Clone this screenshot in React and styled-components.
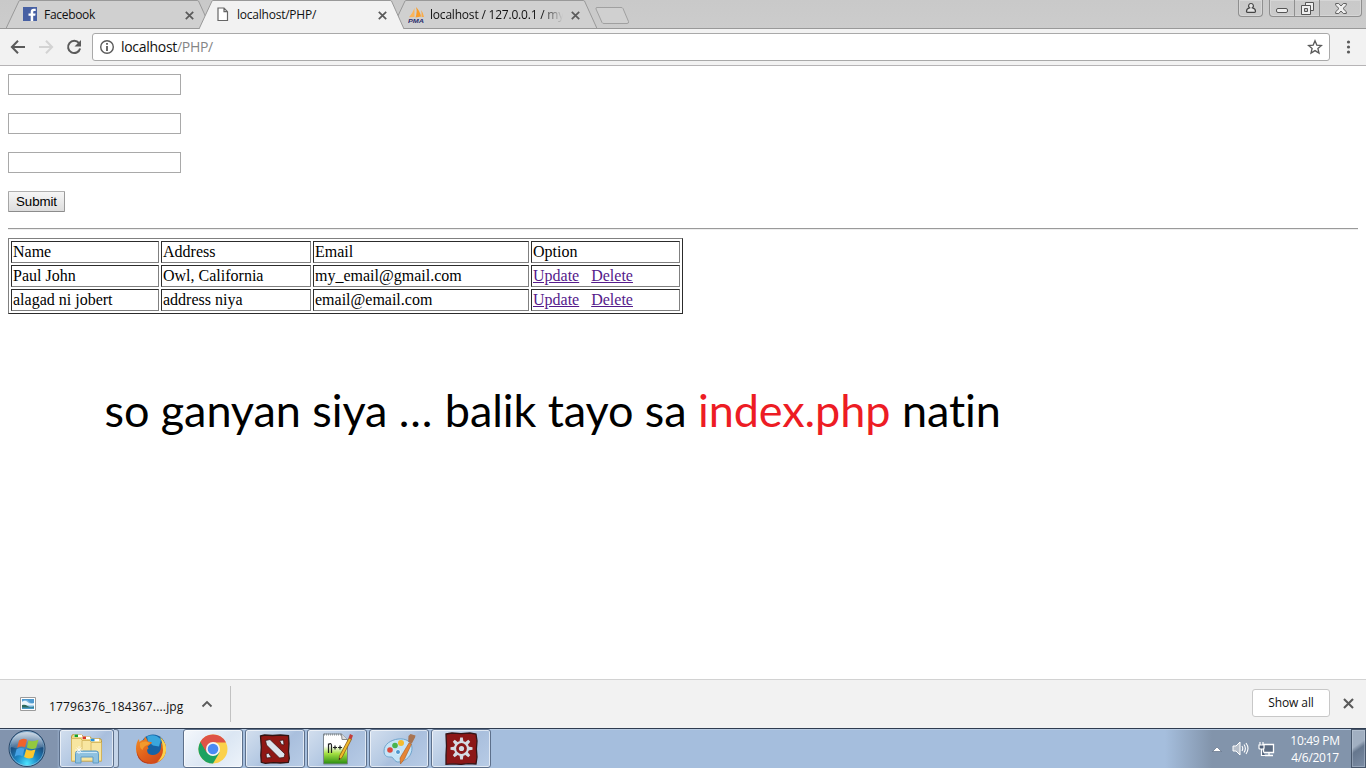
import React from 'react';
import styled, { createGlobalStyle } from 'styled-components';

const ui = `'Open Sans', 'Noto Sans', sans-serif`;

const Global = createGlobalStyle`
  *, *::before, *::after { box-sizing: border-box; }
  html, body { margin: 0; padding: 0; background: #fff; overflow: hidden; }
  svg { display: block; flex: none; }
`;

const Screen = styled.div`
  width: 1366px;
  height: 768px;
  display: flex;
  flex-direction: column;
  overflow: hidden;
  background: #fff;
`;

const Label = styled.span`
  font-family: ${ui};
  font-size: ${p => p.$size || 12}px;
  letter-spacing: ${p => p.$track || 0}px;
  color: ${p => p.$color || '#111'};
  white-space: nowrap;
  line-height: 16px;
`;

/* ---------- tab strip ---------- */
const TabStrip = styled.header`
  height: 29px;
  flex: none;
  display: flex;
  padding-left: 6px;
  background: linear-gradient(#c9c9c9, #cccccc);
  box-shadow: inset 0 -1px 0 #999;
`;

const Tab = styled.div`
  position: relative;
  z-index: ${p => (p.$active ? 2 : 1)};
  width: 205px;
  height: 29px;
  margin-right: -12px;
  padding: 0 11px 0 16px;
  display: flex;
  align-items: center;
`;

const TabShape = styled.svg`
  position: absolute;
  left: 0;
  top: 0;
`;

const TabIcon = styled.span`
  position: relative;
  width: 16px;
  height: 16px;
  margin-top: 1px;
  margin-right: 6px;
  padding-left: ${p => p.$inset || 0}px;
`;

const TabTitle = styled(Label)`
  position: relative;
  width: 134px;
  overflow: hidden;
  mask-image: ${p => (p.$fade ? 'linear-gradient(90deg, #000 112px, transparent 133px)' : 'none')};
`;

const TabClose = styled.svg`
  position: relative;
  margin-left: auto;
  margin-right: 6.5px;
  margin-top: 1px;
`;

const NewTab = styled.svg`
  margin: 6px 0 0 9px;
`;

const CaptionButtons = styled.div`
  display: flex;
  margin-left: auto;
  padding-right: 4px;
  gap: 6px;
  align-items: flex-start;
`;

const CaptionGroup = styled.div`
  display: flex;
  height: 17px;
  border: 1px solid #8f8f8f;
  border-top: 0;
  border-radius: 0 0 4px 4px;
  box-shadow: inset 0 0 0 1px #d6d6d6;
`;

const CaptionButton = styled.div`
  width: ${p => p.$w}px;
  display: flex;
  align-items: center;
  justify-content: center;
  & + & { border-left: 1px solid #8f8f8f; }
`;

/* ---------- toolbar ---------- */
const Toolbar = styled.div`
  height: 37px;
  flex: none;
  display: flex;
  align-items: center;
  background: #f2f2f2;
  border-bottom: 1px solid #b6b4b6;
  padding: 0 10px;
`;

const NavButtons = styled.div`
  width: 82px;
  display: flex;
  gap: 12px;
`;

const Omnibox = styled.div`
  width: 1238px;
  height: 28px;
  border: 1px solid #a9a9a9;
  border-radius: 3px;
  background: #fff;
  display: flex;
  align-items: center;
  padding: 0 6px;
`;

const Url = styled(Label)`
  margin-left: 6px;
  flex: 1;
  i { font-style: normal; color: #858585; }
`;

const MenuDots = styled.svg`
  margin-left: 14px;
`;

/* ---------- web page ---------- */
const Page = styled.main`
  flex: 1;
  padding: 8px;
  font-family: 'Liberation Serif', 'Times New Roman', serif;
  font-size: 16px;
  color: #000;
`;

const Form = styled.form`
  display: flex;
  flex-direction: column;
  align-items: flex-start;
  gap: 18px;
`;

const Field = styled.input`
  width: 173px;
  height: 21px;
  border: 1px solid #a9a9a9;
  background: #fff;
  padding: 1px;
  margin: 0;
  outline: none;
`;

const Submit = styled.button`
  width: 57px;
  height: 21px;
  padding: 0;
  border: 1px solid;
  border-color: #b0b0b0 #9a9a9a #8c8c8c #a6a6a6;
  border-radius: 1px;
  background: linear-gradient(#f6f6f6, #dddddd);
  font: 13.33px/18px 'Liberation Sans', Arial, sans-serif;
  letter-spacing: -0.1px;
  color: #000;
`;

const Rule = styled.hr`
  margin: 16px 0 8px;
  height: 2px;
  border: 0;
  border-top: 1px solid #9a9a9a;
  border-bottom: 1px solid #eeeeee;
`;

const Records = styled.table`
  width: 675px;
  table-layout: fixed;
  border-collapse: separate;
  border-spacing: 2px;
  border: 1px solid;
  border-color: #808080 #2c2c2c #2c2c2c #808080;
`;

const Cell = styled.td`
  height: 22px;
  padding: 1px;
  border: 1px solid;
  border-color: #2c2c2c #808080 #808080 #2c2c2c;
  line-height: 18px;
  white-space: nowrap;
`;

const Link = styled.a`
  color: #551a8b;
  text-decoration: underline;
  margin-right: 12px;
`;

const Note = styled.p`
  margin: 66px 0 0 96.5px;
  font-family: Lato, 'Open Sans', sans-serif;
  font-size: 45px;
  line-height: 60px;
  letter-spacing: -0.08px;
  white-space: nowrap;
  em { font-style: normal; color: #ed1c24; }
`;

const Dots = styled.span`
  letter-spacing: 0.9px;
`;

/* ---------- downloads shelf ---------- */
const Shelf = styled.div`
  height: 49px;
  flex: none;
  display: flex;
  align-items: center;
  background: #f2f2f2;
  border-top: 1px solid #d2d2d2;
  padding: 0 12px 0 20px;
`;

const DownloadItem = styled.div`
  width: 211px;
  height: 36px;
  border-right: 1px solid #c2c2c2;
  display: flex;
  align-items: center;
`;

const FileName = styled(Label)`
  width: 152px;
  margin-left: 13px;
  margin-top: 5px;
`;

const ShowAll = styled.button`
  width: 78px;
  height: 28px;
  margin-left: auto;
  margin-right: 13px;
  padding: 0;
  background: #fff;
  border: 1px solid #c8c8c8;
  border-radius: 3px;
  margin-top: -2px;
`;

const ShelfClose = styled.svg`
  margin-top: -2px;
`;

/* ---------- taskbar ---------- */
const Taskbar = styled.footer`
  height: 40px;
  flex: none;
  display: flex;
  border-top: 1px solid #2f3c50;
  background: linear-gradient(90deg, #8294ae 0 57px, #a5bedd 61px 1165px, #8294ab 1212px);
  box-shadow: inset 0 1px 0 #b7cbe3;
`;

const Start = styled.div`
  width: 59px;
  padding: 0 0 0 8px;
`;

const Task = styled.div`
  width: ${p => p.$w || 60}px;
  height: 39px;
  margin-right: ${p => p.$mr ?? 2}px;
  display: flex;
  align-items: center;
  justify-content: center;
  border: 1px solid ${p => (p.$plain ? 'transparent' : '#5d708b')};
  border-radius: 3px;
  background: ${p =>
    p.$plain
      ? 'transparent'
      : p.$bright
      ? 'linear-gradient(135deg, #f5f8fc, #dbe6f3 55%, #edf3fa)'
      : 'linear-gradient(135deg, #d3dfee, #b5c9e3 45%, #a9bfdd 55%, #b8cce6)'};
  box-shadow: ${p => (p.$plain ? 'none' : 'inset 0 0 0 1px rgba(255,255,255,.6)')};
`;

const StackEdge = styled.div`
  width: 5px;
  height: 39px;
  border: 1px solid #64768f;
  border-left: 0;
  border-radius: 0 3px 3px 0;
  background: #c4d4e8;
`;

const Tray = styled.div`
  margin-left: auto;
  display: flex;
  align-items: center;
`;

const TrayIcons = styled.div`
  display: flex;
  align-items: center;
  gap: 9px;
  width: 79px;
`;

const Clock = styled.div`
  width: 50px;
  margin-right: 11px;
  display: flex;
  flex-direction: column;
  align-items: center;
  gap: 1px;
  padding-top: 2px;
`;

const ShowDesktop = styled.div`
  width: 15px;
  height: 39px;
  border: 1px solid #47566b;
  background: linear-gradient(145deg, #a1afc1 0 40%, #66778e 52%, #7c8da5);
  box-shadow: inset 0 0 0 1px rgba(210, 222, 236, .35);
`;

/* ---------- drawings ---------- */
const FacebookIcon = () => (
  <svg width="15" height="15" viewBox="0 0 15 15">
    <path d="M1 0h14v14H1z" fill="#4760a3" />
    <path d="M8.700 14V8.800H6.500V6.400h2.200V4.700C8.700 2.800 9.800 1.700 11.700 1.700h2v2.200H12.500c-1 0-1.300.4-1.300 1.200v1.300h2.400l-.4 2.400h-2V14z" fill="#fff" />
  </svg>
);

const FileIcon = () => (
  <svg width="12" height="15" viewBox="0 0 12 15">
    <path d="M1 1h6l3.500 3.700V13.500H1zM7 1v3.700h3.500" fill="#fff" stroke="#666" strokeWidth="1.2" />
  </svg>
);

const PmaIcon = () => (
  <svg width="17" height="16" viewBox="0 0 17 16">
    <path d="M6.500 1v9L1 10.200Q4.500 6.500 6.500 1z" fill="#fbb55a" />
    <path d="M8 0q4 4 5 9.500L7.500 10.500Q9.500 5 8 0z" fill="#f89c28" />
    <path d="M13 3q2.500 3 3 7h-2.500Q14 6 13 3z" fill="#f9ab49" />
    <text x="0" y="15.500" fontFamily="Liberation Sans, sans-serif" fontWeight="700" fontStyle="italic" fontSize="6" textLength="16" lengthAdjust="spacingAndGlyphs" fill="#2b2d6d">PMA</text>
  </svg>
);

const Close = ({ as: Tag = 'svg', size = 9, ...rest }) => (
  <Tag width={size} height={size} viewBox="0 0 9 9" {...rest}>
    <path d="M.8.8l7.400 7.400M8.200.8L.8 8.200" stroke="#5a5a5a" strokeWidth="1.700" fill="none" />
  </Tag>
);

const ImageIcon = () => (
  <svg width="16" height="14" viewBox="0 0 16 14">
    <path d="M.5.5h15v13H.5z" fill="#fff" stroke="#9b9b9b" />
    <path d="M2 2h12v10H2z" fill="#79b7df" />
    <path d="M2 4q5-2 7 .5T14 6V2H2z" fill="#4f9ad0" />
    <path d="M2 5q3-2.500 5.500 0t6.500 1v2.500H2z" fill="#e9f5fc" />
    <path d="M2 8q3-1 5.500 1T14 9.500V11H2z" fill="#2d6a5a" />
    <path d="M2 10.500h12V12H2z" fill="#4a9bc8" />
  </svg>
);

const StartOrb = () => (
  <svg width="38" height="39" viewBox="0 0 38 39">
    <defs>
      <radialGradient id="orb" cx=".5" cy=".92" r=".85">
        <stop offset="0" stopColor="#4ce4ff" />
        <stop offset=".35" stopColor="#1c88c5" />
        <stop offset=".7" stopColor="#1c4f80" />
        <stop offset="1" stopColor="#547ca5" />
      </radialGradient>
      <linearGradient id="gloss" x2="0" y2="1">
        <stop offset="0" stopColor="#fff" stopOpacity=".7" />
        <stop offset="1" stopColor="#fff" stopOpacity=".12" />
      </linearGradient>
    </defs>
    <circle cx="19" cy="19.500" r="18" fill="url(#orb)" stroke="#274667" />
    <circle cx="19" cy="19.500" r="17" fill="none" stroke="#9cc7e2" strokeOpacity=".6" />
    <path d="M3 18C3 8 10 3 19 3s16 5 16 15q-16 5-32 0z" fill="url(#gloss)" />
    <path d="M11 11.500q4-3 8-.8l-2 7.500q-4-1.800-7.900.6z" fill="#f1632a" />
    <path d="M20.500 11.300q4 2 10-.6l-2.400 8.300q-4.600 2-9.200-.4z" fill="#93c83e" />
    <path d="M8.500 20.300q4-2.400 8-.6l-2 7.500q-4-2-7.900.5z" fill="#46a2e5" />
    <path d="M18.200 20.200q4.500 2.200 9.300.4l-2.400 8q-4.600 2-9-.5z" fill="#fdc72e" />
  </svg>
);

const FolderIcon = () => (
  <svg width="33" height="31" viewBox="0 0 33 31">
    <path d="M1.500 4q0-2.500 2-2.500h8l1.500 2h7l1.500 2H29q2.500 0 2.500 2V28h-30z" fill="#f1da83" stroke="#b99a45" />
    <path d="M4 2.800h8" stroke="#fff" strokeWidth="2.500" />
    <path d="M4.500 2.800h3.500" stroke="#12a12b" strokeWidth="2.500" />
    <path d="M12 4.800h8" stroke="#fff" strokeWidth="2.500" />
    <path d="M12.500 4.800h3.500" stroke="#d6382a" strokeWidth="2.500" />
    <path d="M20 7h9" stroke="#fff" strokeWidth="2.500" />
    <path d="M20.500 7h4" stroke="#2192df" strokeWidth="2.500" />
    <path d="M1.500 5.500H11l1 2h8l1 2h10.500V28h-30z" fill="#f8e6a0" stroke="#d0b055" strokeWidth=".8" />
    <path d="M12 8v10M21 10v8" stroke="#d8bc66" />
    <path d="M5.500 30V20.500q0-2.500 2.500-2.500h18q2.500 0 2.500 2.500V30h-5.500v-6H11v6z" fill="#8fc2e0" stroke="#5f9bc4" />
    <path d="M7 19.500h20" stroke="#cfe9f7" />
    <path d="M9 13v8M5 17h8M6.500 14.500l5 5M11.500 14.500l-5 5" stroke="#fff" strokeWidth=".8" strokeOpacity=".85" />
  </svg>
);

const FirefoxIcon = () => (
  <svg width="32" height="32" viewBox="0 0 32 32">
    <defs>
      <linearGradient id="fox" x1=".1" x2=".9" y2="1">
        <stop offset="0" stopColor="#ef8a25" />
        <stop offset=".5" stopColor="#e1601a" />
        <stop offset="1" stopColor="#c9411a" />
      </linearGradient>
    </defs>
    <circle cx="18" cy="14" r="12.500" fill="#1763a5" />
    <path d="M12 3.500q8-3.500 14 3l-2 7-6-1-5-4z" fill="#39a6dd" />
    <path d="M25 4q7 6 6 14c-1 8-8 13-15 13S1 25 1 16q0-7 3-10l.5 3Q6 7 9 7l1-3.500q2 2.500 3 5 3.500 0 4 1.500l-4.500 3.500q2 3-.5 3 0 5 5 5.500 5 .5 8-4 2-5 .5-9 2 2 2.500 5 .5-6-3-10z" fill="url(#fox)" />
    <path d="M25 4q7 6 6 14-1 8-9 11.500 6-6.500 6-12.500-.5-8-3-13z" fill="#fbd04a" />
    <path d="M5 10q3-2 6-1.500l4.500 1.500-3 2q-4 1-5 5Q4 15 5 10z" fill="#f39a2c" />
    <path d="M2 18q2 12 14 12Q8 32 3.500 25 2 22 2 18z" fill="#b5391a" />
  </svg>
);

const ChromeIcon = () => (
  <svg width="30" height="30" viewBox="0 0 30 30">
    <circle cx="15" cy="15" r="14.500" fill="#fbd14b" />
    <path d="M15 15L2.440 7.750A14.500 14.500 0 0 0 15 29.500L21.500 18.500z" fill="#1ca261" />
    <path d="M15 15l-6.500 3L2.440 7.750A14.500 14.500 0 0 1 27.560 7.750L27.800 8.500H15z" fill="#de5347" />
    <path d="M2.440 7.750L8.800 18.500 15 15z" fill="#de5347" />
    <circle cx="15" cy="15" r="7" fill="#f4f4f4" />
    <circle cx="15" cy="15" r="5.300" fill="#4a8af4" />
  </svg>
);

const DotaIcon = () => (
  <svg width="32" height="30" viewBox="0 0 32 30">
    <path d="M1.500 2l4-1 8 .5 8-.5 8 .5.5 8-.5 8 .8 7-1 4-8 .5-7-.3-8 .6-4-1-.5-7 .5-8z" fill="#8f1714" stroke="#301312" strokeWidth="1.300" />
    <path d="M6.500 6.500l4.500-1L26 20l-1 3.500-4.500.5L7.500 11zM20.500 6.500l4-.5.5 5-2.500-.5zM7 20l2.500-1 3 4.500-5 .5z" fill="#dbe3ec" stroke="#421313" strokeWidth=".8" />
  </svg>
);

const NotepadIcon = () => (
  <svg width="31" height="34" viewBox="0 0 31 34">
    <defs>
      <linearGradient id="npp" x2="0" y2="1">
        <stop offset=".4" stopColor="#fff" />
        <stop offset=".65" stopColor="#a5e042" />
        <stop offset="1" stopColor="#278b10" />
      </linearGradient>
    </defs>
    <path d="M1.500 2h18l6 5.500V32h-24z" fill="url(#npp)" stroke="#7d8790" />
    <path d="M2 2.500h17" stroke="#8c949a" strokeWidth="2" strokeDasharray="1 1" />
    <path d="M19.500 2l.5 5.500h5.500" fill="#ddd" stroke="#888" />
    <path d="M6.500 21v-9.500M6.500 12.500q3-2 3 1V21" fill="none" stroke="#222" strokeWidth="1.200" />
    <path d="M11 15.500h4M13 13.500v4M16 15.500h4M18 13.500v4" fill="none" stroke="#222" strokeWidth="1.200" />
    <path d="M27 6l2.500 1.200-9.500 18.300-3 2.500.5-4z" fill="#efb929" stroke="#8a5b18" strokeWidth=".8" />
    <path d="M28 2l3 1.500-1.500 3.700L26.500 6z" fill="#c33d38" />
    <path d="M17.200 25.800l1.200.7-1.500 1.800z" fill="#222" />
  </svg>
);

const PaintIcon = () => (
  <svg width="33" height="32" viewBox="0 0 33 32">
    <path d="M15 6c8-1 14 3 14 9 0 7-5 13-13 14-5 .5-5-5-8-5S1 24 1 18C1 11 8 7 15 6z" fill="#c5e4f7" stroke="#6fa4cc" />
    <circle cx="7" cy="17" r="2.800" fill="#dd4a3d" />
    <circle cx="12" cy="12.500" r="2.800" fill="#49b34f" />
    <circle cx="18" cy="10" r="3" fill="#f4bc2e" />
    <circle cx="15" cy="19" r="2.500" fill="#4d98cf" stroke="#e9f7ff" />
    <path d="M26 10l2.500 1-7 15-4 5-.5-6z" fill="#e68635" stroke="#ad5b22" strokeWidth=".6" />
    <path d="M25.500 3l2-2 5 1.500-.5 2-3.200 6-3.600-1.500z" fill="#a87452" />
  </svg>
);

const teeth = [0, 45, 90, 135, 180, 225, 270, 315];
const GearIcon = () => (
  <svg width="33" height="33" viewBox="0 0 33 33">
    <path d="M1 2l6-1 9 .6L25 1l6 1 1 7-.6 8 .6 8-1 7-8-.4-7 .8-8-.6-7 .5L1 23l.5-9z" fill="#8c1718" stroke="#351417" strokeWidth="1.300" />
    <g fill="#d5dce4">
      {teeth.map(a => (
        <path key={a} d="M15.200 5.500h2.600l.7 4.500h-4z" transform={`rotate(${a} 16.500 16.500)`} />
      ))}
    </g>
    <circle cx="16.500" cy="16.500" r="6.500" fill="none" stroke="#d5dce4" strokeWidth="2.200" />
    <circle cx="16.500" cy="16.500" r="2.600" fill="#d5dce4" />
  </svg>
);

const SpeakerIcon = () => (
  <svg width="17" height="15" viewBox="0 0 17 15">
    <path d="M1 5h3l4-4v13l-4-4H1z" fill="#b7bfca" stroke="#fff" />
    <path d="M10 5q1.500 2.500 0 5M12 3.500q2.800 4 0 8M14 2q4 5.500 0 11" fill="none" stroke="#fff" strokeWidth="1.100" />
  </svg>
);

const NetworkIcon = () => (
  <svg width="17" height="16" viewBox="0 0 17 16">
    <path d="M5.500 3.500h10v8h-10zM7 14.500h8M11 12v2" fill="#5d6d83" stroke="#fff" strokeWidth="1.300" />
    <path d="M1 4h5v3q0 1-1 1H2Q1 8 1 7zM2 1v3M5 1v3M3.500 8v6.500H7" fill="#52627a" stroke="#fff" strokeWidth="1.200" />
  </svg>
);

const tabs = [
  { title: 'Facebook', icon: <FacebookIcon />, track: -0.3 },
  { title: 'localhost/PHP/', icon: <FileIcon />, inset: 2, active: true, track: -0.23 },
  { title: 'localhost / 127.0.0.1 / my', icon: <PmaIcon />, fade: true, track: -0.2 },
];

const rows = [
  ['Paul John', 'Owl, California', 'my_email@gmail.com'],
  ['alagad ni jobert', 'address niya', 'email@email.com'],
];

export default function App() {
  return (
    <>
      <Global />
      <Screen>
        <TabStrip>
          {tabs.map(t => (
            <Tab key={t.title} $active={t.active}>
              <TabShape width="205" height="29" viewBox="0 0 205 29">
                <path
                  d={t.active ? 'M0 29L13 1Q13.500.5 14 .5H191Q192 .5 192.500 1L205 29' : 'M0 28.500L13 1Q13.500.5 14 .5H191Q192 .5 192.500 1L205 28.500z'}
                  fill={t.active ? '#f2f2f2' : '#d0d0d0'}
                  stroke="#999"
                />
              </TabShape>
              <TabIcon $inset={t.inset}>{t.icon}</TabIcon>
              <TabTitle $track={t.track} $fade={t.fade}>{t.title}</TabTitle>
              <Close as={TabClose} />
            </Tab>
          ))}
          <NewTab width="37" height="19" viewBox="0 0 37 19">
            <path d="M3 1.500H27Q28.500 1.500 29 2.500L34.500 15.500Q35 17.500 33 17.500H10Q8.500 17.500 8 16.500L2 3Q1.500 1.500 3 1.500z" fill="#d0d0d0" stroke="#a0a0a0" />
          </NewTab>
          <CaptionButtons>
            <CaptionGroup>
              <CaptionButton $w={23}>
                <svg width="12" height="12" viewBox="0 0 12 12">
                  <path d="M6 1.500a2.400 2.400 0 0 1 1.500 4.300q3 .7 3 3.500 0 1-1 1h-7q-1 0-1-1 0-2.800 3-3.500A2.400 2.400 0 0 1 6 1.500z" fill="#e5e5e5" stroke="#444" strokeWidth="1.200" />
                </svg>
              </CaptionButton>
            </CaptionGroup>
            <CaptionGroup>
              <CaptionButton $w={24}>
                <svg width="12" height="13" viewBox="0 0 12 13">
                  <rect x=".5" y="6.500" width="11" height="4" rx="1.500" fill="#eee" stroke="#555" />
                </svg>
              </CaptionButton>
              <CaptionButton $w={25}>
                <svg width="13" height="13" viewBox="0 0 13 13">
                  <path d="M4.500.5h8v8h-8z" fill="#eee" stroke="#555" />
                  <path d="M.5 3.500h9v9h-9z" fill="#eee" stroke="#555" />
                  <path d="M3.500 6.500h3v3h-3z" fill="#ccc" stroke="#555" />
                </svg>
              </CaptionButton>
              <CaptionButton $w={42}>
                <svg width="12" height="11" viewBox="0 0 12 11">
                  <path d="M.7.5h3L6 3 8.300.5h3v1.800L8 5.500l3.300 3.200v1.800h-3L6 8l-2.300 2.500h-3V8.700L4 5.500.7 2.300z" fill="#eee" stroke="#555" strokeWidth=".9" />
                </svg>
              </CaptionButton>
            </CaptionGroup>
          </CaptionButtons>
        </TabStrip>

        <Toolbar>
          <NavButtons>
            <svg width="16" height="16" viewBox="0 0 16 16">
              <path d="M15 8H2.500M8 1.800L1.900 8 8 14.200" fill="none" stroke="#5a5a5a" strokeWidth="2" />
            </svg>
            <svg width="16" height="16" viewBox="0 0 16 16">
              <path d="M1 8h12.500M8 1.800L14.100 8 8 14.200" fill="none" stroke="#d3d3d3" strokeWidth="2" />
            </svg>
            <svg width="16" height="16" viewBox="0 0 16 16">
              <path d="M13 4.200A6.100 6.100 0 1 0 14.100 9.500" fill="none" stroke="#5a5a5a" strokeWidth="2" />
              <path d="M15 1v6.500H8.500z" fill="#5a5a5a" />
            </svg>
          </NavButtons>
          <Omnibox>
            <svg width="16" height="16" viewBox="0 0 16 16">
              <circle cx="8" cy="8" r="6.300" fill="none" stroke="#5a5a5a" strokeWidth="1.400" />
              <path d="M8 7v5M8 4v1.700" stroke="#5a5a5a" strokeWidth="1.800" />
            </svg>
            <Url $size={14} $track={-0.3}>localhost<i>/PHP/</i></Url>
            <svg width="16" height="16" viewBox="0 0 16 16">
              <path d="M8 1.800l1.800 4.300 4.700.4-3.600 3 1.100 4.600L8 11.600l-4 2.500 1.100-4.600-3.600-3 4.700-.4z" fill="none" stroke="#5a5a5a" strokeWidth="1.300" />
            </svg>
          </Omnibox>
          <MenuDots width="8" height="14" viewBox="0 0 8 14" fill="#5a5a5a">
            <circle cx="4.500" cy="2" r="1.600" />
            <circle cx="4.500" cy="7" r="1.600" />
            <circle cx="4.500" cy="12" r="1.600" />
          </MenuDots>
        </Toolbar>

        <Page>
          <Form>
            <Field />
            <Field />
            <Field />
            <Submit type="button">Submit</Submit>
          </Form>
          <Rule />
          <Records>
            <colgroup>
              <col style={{ width: 148 }} />
              <col style={{ width: 150 }} />
              <col style={{ width: 216 }} />
              <col style={{ width: 149 }} />
            </colgroup>
            <tbody>
              <tr>
                {['Name', 'Address', 'Email', 'Option'].map(h => <Cell key={h}>{h}</Cell>)}
              </tr>
              {rows.map(r => (
                <tr key={r[0]}>
                  {r.map(c => <Cell key={c}>{c}</Cell>)}
                  <Cell><Link>Update</Link><Link>Delete</Link></Cell>
                </tr>
              ))}
            </tbody>
          </Records>
          <Note>so ganyan siya <Dots>...</Dots> balik tayo sa <em>index.php</em> natin</Note>
        </Page>

        <Shelf>
          <DownloadItem>
            <ImageIcon />
            <FileName $track={0.17}>17796376_184367....jpg</FileName>
            <svg width="12" height="8" viewBox="0 0 12 8">
              <path d="M1.500 6.500L6 2l4.500 4.500" fill="none" stroke="#5a5a5a" strokeWidth="1.800" />
            </svg>
          </DownloadItem>
          <ShowAll><Label $track={-0.1}>Show all</Label></ShowAll>
          <Close as={ShelfClose} size={11} />
        </Shelf>

        <Taskbar>
          <Start><StartOrb /></Start>
          <Task $w={55} $mr={0}><FolderIcon /></Task>
          <StackEdge />
          <Task $plain $w={64} $mr={0}><FirefoxIcon /></Task>
          <Task $bright><ChromeIcon /></Task>
          <Task><DotaIcon /></Task>
          <Task><NotepadIcon /></Task>
          <Task><PaintIcon /></Task>
          <Task><GearIcon /></Task>
          <Tray>
            <TrayIcons>
              <svg width="12" height="8" viewBox="0 0 12 8">
                <path d="M1.500 6.500L6 2l4.500 4.500z" fill="#fff" stroke="#506078" strokeWidth=".6" />
              </svg>
              <SpeakerIcon />
              <NetworkIcon />
            </TrayIcons>
            <Clock>
              <Label $color="#fff" $track={-0.3}>10:49 PM</Label>
              <Label $color="#fff" $track={-0.3}>4/6/2017</Label>
            </Clock>
            <ShowDesktop />
          </Tray>
        </Taskbar>
      </Screen>
    </>
  );
}
